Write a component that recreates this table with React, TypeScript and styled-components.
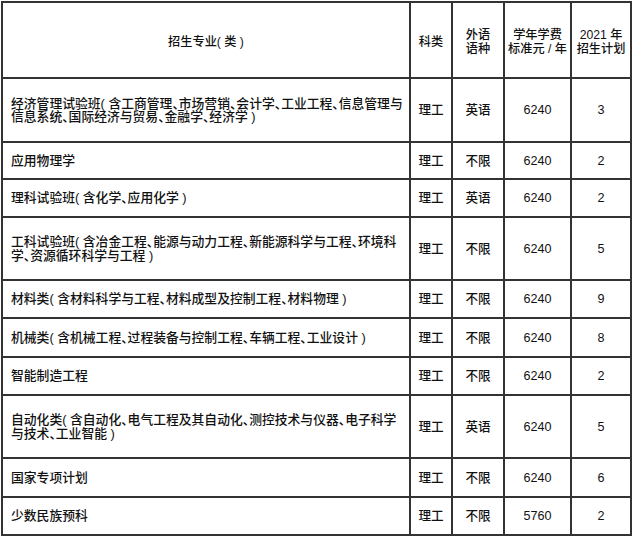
import React from 'react'
import styled, { createGlobalStyle } from 'styled-components'

const GlobalStyle = createGlobalStyle`
  html, body {
    margin: 0;
    padding: 0;
    background: #fff;
  }
  body {
    font-family: "Liberation Sans", "Noto Sans CJK SC", sans-serif;
    color: #111;
  }
`

const COLUMNS = '406px 40px 50px 65px 58px'

const Table = styled.div`
  display: flex;
  flex-direction: column;
  gap: 2px;
  padding: 2px;
  margin: 1px 0 0 1px;
  width: fit-content;
  background: #333;
`

const Row = styled.div<{ $h: number }>`
  display: grid;
  grid-template-columns: ${COLUMNS};
  gap: 2px;
  height: ${(p) => p.$h}px;
`

const Cell = styled.div<{ $left?: boolean }>`
  background: #fff;
  display: flex;
  flex-direction: column;
  justify-content: center;
  align-items: ${(p) => (p.$left ? 'flex-start' : 'center')};
  text-align: ${(p) => (p.$left ? 'left' : 'center')};
  padding: ${(p) => (p.$left ? '0 0 0 8px' : '0')};
  font-size: ${(p) => (p.$left ? '12.8px' : '12.6px')};
  font-weight: 500;
  font-feature-settings: ${(p) => (p.$left ? '"halt"' : 'normal')};
  line-height: ${(p) => (p.$left ? '13.5px' : '14px')};
  overflow: hidden;
`

const HeadCell = styled(Cell)`
  padding-top: 3px;
  font-size: 12.2px;
`

const Line = styled.span`
  white-space: nowrap;
`

type Major = {
  name: string[]
  kind: string
  lang: string
  fee: string
  plan: string
  h: number
}

const majors: Major[] = [
  {
    name: [
      '经济管理试验班( 含工商管理、市场营销、会计学、工业工程、信息管理与',
      '信息系统、国际经济与贸易、金融学、经济学 )',
    ],
    kind: '理工', lang: '英语', fee: '6240', plan: '3', h: 62,
  },
  { name: ['应用物理学'], kind: '理工', lang: '不限', fee: '6240', plan: '2', h: 35 },
  { name: ['理科试验班( 含化学、应用化学 )'], kind: '理工', lang: '英语', fee: '6240', plan: '2', h: 36 },
  {
    name: [
      '工科试验班( 含冶金工程、能源与动力工程、新能源科学与工程、环境科',
      '学、资源循环科学与工程 )',
    ],
    kind: '理工', lang: '不限', fee: '6240', plan: '5', h: 61,
  },
  {
    name: ['材料类( 含材料科学与工程、材料成型及控制工程、材料物理 )'],
    kind: '理工', lang: '不限', fee: '6240', plan: '9', h: 36,
  },
  {
    name: ['机械类( 含机械工程、过程装备与控制工程、车辆工程、工业设计 )'],
    kind: '理工', lang: '不限', fee: '6240', plan: '8', h: 37,
  },
  { name: ['智能制造工程'], kind: '理工', lang: '不限', fee: '6240', plan: '2', h: 36 },
  {
    name: [
      '自动化类( 含自动化、电气工程及其自动化、测控技术与仪器、电子科学',
      '与技术、工业智能 )',
    ],
    kind: '理工', lang: '英语', fee: '6240', plan: '5', h: 61,
  },
  { name: ['国家专项计划'], kind: '理工', lang: '不限', fee: '6240', plan: '6', h: 37 },
  { name: ['少数民族预科'], kind: '理工', lang: '不限', fee: '5760', plan: '2', h: 36 },
]

export default function App() {
  return (
    <>
      <GlobalStyle />
      <Table>
        <Row $h={74}>
          <HeadCell>招生专业( 类 )</HeadCell>
          <HeadCell>科类</HeadCell>
          <HeadCell>
            <Line>外语</Line>
            <Line>语种</Line>
          </HeadCell>
          <HeadCell>
            <Line>学年学费</Line>
            <Line>标准元 / 年</Line>
          </HeadCell>
          <HeadCell>
            <Line>2021 年</Line>
            <Line>招生计划</Line>
          </HeadCell>
        </Row>
        {majors.map((m) => (
          <Row key={m.name[0]} $h={m.h}>
            <Cell $left>
              {m.name.map((l) => (
                <Line key={l}>{l}</Line>
              ))}
            </Cell>
            <Cell>{m.kind}</Cell>
            <Cell>{m.lang}</Cell>
            <Cell>{m.fee}</Cell>
            <Cell>{m.plan}</Cell>
          </Row>
        ))}
      </Table>
    </>
  )
}
